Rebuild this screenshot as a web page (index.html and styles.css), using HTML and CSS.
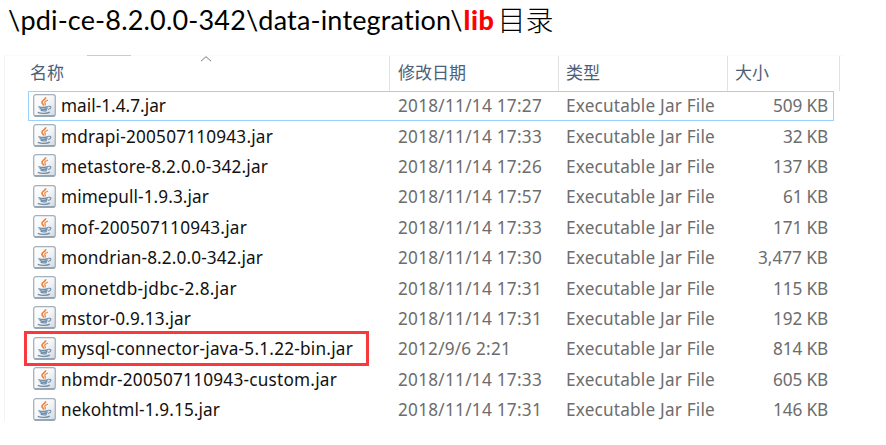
FILE: index.html
```
<!DOCTYPE html>
<html lang="zh-CN">
<head>
<meta charset="utf-8">
<title>lib</title>
<link rel="stylesheet" href="styles.css">
</head>
<body>
<svg class="defs" width="0" height="0" aria-hidden="true">
  <defs>
    <linearGradient id="paper" x1="0" y1="0" x2="1" y2="1">
      <stop offset="0" stop-color="#ffffff"/><stop offset=".5" stop-color="#f4f6f8"/><stop offset="1" stop-color="#cfd8e0"/>
    </linearGradient>
    <symbol id="jar" viewBox="0 0 23 23">
      <rect x=".7" y=".7" width="21.6" height="21.6" rx="2.2" fill="url(#paper)" stroke="#a5b1bc" stroke-width="1.3"/>
      <path d="M1.5 21.8H21.5" stroke="#8798a8" stroke-width="1.2"/>
      <path d="M12.6 3.2C13.3 5.5 8.2 6.4 9 8.7c.3.9 1.6 1.6 1.7 2.9" fill="none" stroke="#ed8139" stroke-width="1.7"/>
      <path d="M15 6.2c-3.6 1.2-3.8 2.1-2.8 3.3.6.8.2 1.4-.5 2" fill="none" stroke="#ef9355" stroke-width="1.3"/>
      <path d="M5.4 12.6c2.8 1.1 7.3 1 9.8.1M6.6 14.4c2 1 5.9 1 7.9.1M7.6 16.2c1.5.7 4.6.7 6.2.1M4.8 18.4c3.5 1.5 9.5 1.2 12-.3" fill="none" stroke="#718fa9" stroke-width="1.4"/>
      <path d="M15.3 12.4c3.6-.8 3.4 2.2-.1 3.1" fill="none" stroke="#718fa9" stroke-width="1.1"/>
    </symbol>
  </defs>
</svg>
<h1 class="title"><span class="path" data-width="455">\pdi-ce-8.2.0.0-342\data-integration\</span><b data-width="31">lib</b><span class="suffix">目录</span></h1>
<main class="explorer">
  <div class="head">
    <div class="col"><i class="tab-edge"></i>名称<svg class="sort" viewBox="0 0 12 6"><path d="M1 5.2 6 .7l5 4.5" fill="none" stroke="#777"/></svg></div>
    <div class="col">修改日期</div>
    <div class="col">类型</div>
    <div class="col">大小</div>
  </div>
  <div class="rows" id="rows"></div>
</main>
<script src="files.js"></script>
</body>
</html>
```
FILE: styles.css
```
* { box-sizing: border-box; }
body { margin: 0; width: 886px; height: 445px; overflow: hidden; background: #fff; font-family: "Noto Sans", "Noto Sans CJK SC", sans-serif; }
.defs { position: absolute; }
.title { display: flex; align-items: center; height: 40px; margin: 0; padding-left: 8px; font: 400 27px/40px Lato, "Noto Sans CJK SC", sans-serif; color: #000; white-space: pre; }
.title b { color: #f00; font-weight: 900; margin-left: 1px; }
.suffix { margin-left: 3px; font-family: "Noto Sans CJK SC", sans-serif; font-size: 28px; font-weight: 300; line-height: 36px; padding-bottom: 3px; }
.explorer { width: 840px; height: 366px; margin: 15px 0 0 4px; padding-left: 24px; border-left: 1px solid #f3f3f3; border-top: 1px solid #fafafa; }
.head { display: grid; grid-template-columns: 361px 169px 169px 112px; height: 35px; }
.col { position: relative; padding: 0 0 0 8px; border-right: 1px solid #e2e2e2; color: #4c607a; font-size: 17px; line-height: 33px; }
.col:first-child { padding-left: 1px; }
.col:nth-child(n+3) { padding-left: 7px; }
.sort { position: absolute; left: 171px; top: 0; width: 12px; height: 6px; }
.tab-edge { position: absolute; left: 58px; top: -1px; width: 44px; height: 1px; background: #f2bcbc; }
.rows { display: grid; grid-auto-rows: 30.4px; width: 806px; margin-left: -1px; }
.row { position: relative; display: grid; grid-template-columns: 33px 337px 168px 171px 91px; align-items: center; width: 806px; font-size: 17.2px; line-height: 30px; color: #6d6d6d; white-space: pre; }
.row.focused { box-shadow: inset 0 0 0 1px #99d1ff; }
.row .name { color: #111; }
.row .size { text-align: right; }
.row span span { display: inline-block; }
.icon { display: block; width: 23px; height: 23px; margin: -2px 0 0 5px; }
.row.marked::before { content: ""; position: absolute; box-sizing: border-box; left: -4px; top: -3px; width: 345px; height: 35px; border: 3px solid #f93a3d; }
```
FILE: files.js
```
const files = [
  ["mail-1.4.7.jar", 105, "2018/11/14 17:27", "509 KB", 55],
  ["mdrapi-200507110943.jar", 212, "2018/11/14 17:33", "32 KB", 45],
  ["metastore-8.2.0.0-342.jar", 207, "2018/11/14 17:26", "137 KB", 55],
  ["mimepull-1.9.3.jar", 148, "2018/11/14 17:57", "61 KB", 45],
  ["mof-200507110943.jar", 186, "2018/11/14 17:33", "171 KB", 55],
  ["mondrian-8.2.0.0-342.jar", 202, "2018/11/14 17:30", "3,477 KB", 70],
  ["monetdb-jdbc-2.8.jar", 176, "2018/11/14 17:31", "115 KB", 55],
  ["mstor-0.9.13.jar", 130, "2018/11/14 17:31", "192 KB", 55],
  ["mysql-connector-java-5.1.22-bin.jar", 292, "2012/9/6 2:21", "814 KB", 55],
  ["nbmdr-200507110943-custom.jar", 276, "2018/11/14 17:33", "605 KB", 55],
  ["nekohtml-1.9.15.jar", 159, "2018/11/14 17:31", "146 KB", 55]
];

const cell = (kind, text, width) => `<span class="${kind}"><span data-width="${width}">${text}</span></span>`;

document.getElementById("rows").innerHTML = files.map(([name, width, date, size, sizeWidth], i) => {
  const state = i === 0 ? " focused" : name.startsWith("mysql") ? " marked" : "";
  return `<div class="row${state}"><svg class="icon"><use href="#jar"/></svg>` +
    cell("name", name, width) + cell("date", date, date.length > 13 ? 144 : 113) +
    cell("type", "Executable Jar File", 149) + cell("size", size, sizeWidth) + "</div>";
}).join("");

document.querySelectorAll("[data-width]").forEach((el) => {
  const gap = Number(el.dataset.width) - el.getBoundingClientRect().width;
  el.style.letterSpacing = `${gap / el.textContent.length}px`;
});
```
